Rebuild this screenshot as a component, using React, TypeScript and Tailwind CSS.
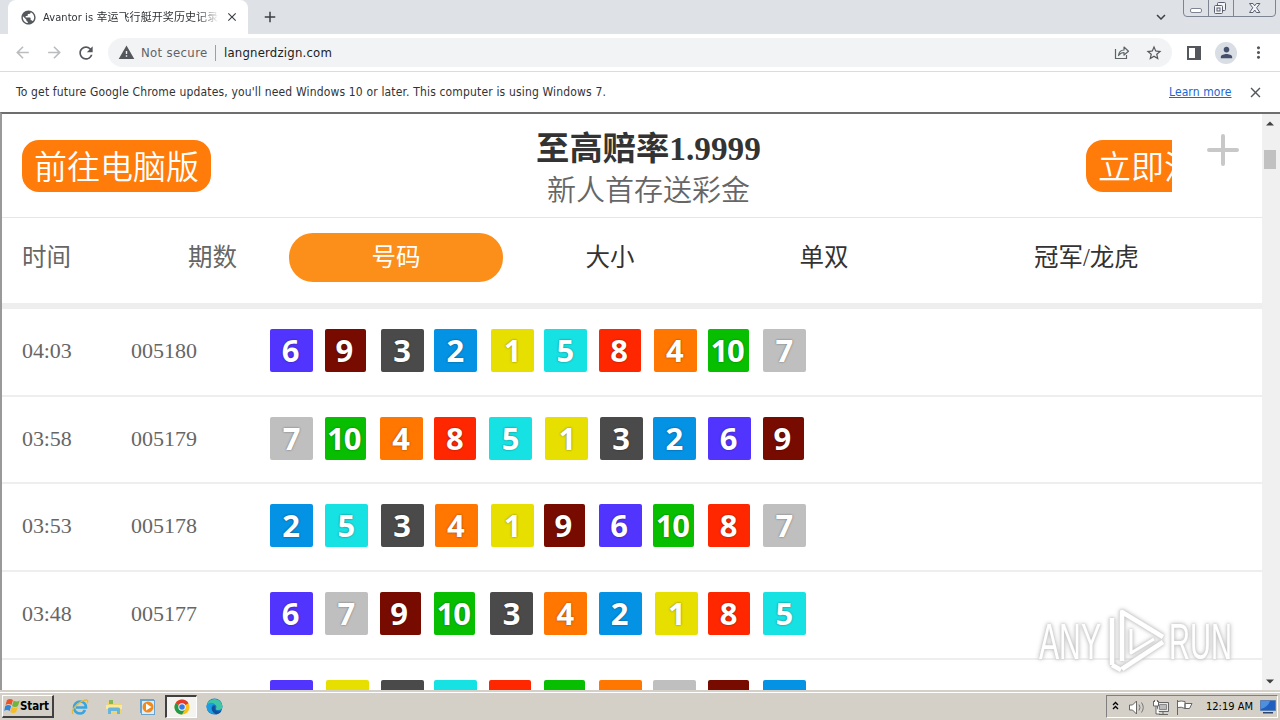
import type { ReactNode } from 'react';
import {
  MdAdd,
  MdArrowBack,
  MdArrowForward,
  MdClose,
  MdKeyboardArrowDown,
  MdMoreVert,
  MdPerson,
  MdPublic,
  MdRefresh,
  MdStarBorder,
  MdWarning
} from 'react-icons/md';

interface Draw {
  time: string;
  issue: string;
  numbers: number[];
}

const draws: Draw[] = [
  { time: '04:03', issue: '005180', numbers: [6, 9, 3, 2, 1, 5, 8, 4, 10, 7] },
  { time: '03:58', issue: '005179', numbers: [7, 10, 4, 8, 5, 1, 3, 2, 6, 9] },
  { time: '03:53', issue: '005178', numbers: [2, 5, 3, 4, 1, 9, 6, 10, 8, 7] },
  { time: '03:48', issue: '005177', numbers: [6, 7, 9, 10, 3, 4, 2, 1, 8, 5] }
];

const lastNumbers = [6, 1, 3, 5, 8, 10, 4, 7, 9, 2];

const tileStyles: Record<number, string> = {
  1: 'bg-[#e6df00] ml-[1.5px] w-[43px] pl-[1px]',
  2: 'bg-[#0492e4] w-[43px] pr-[1px]',
  3: 'bg-[#4a4a4a] ml-[1px] w-[43px]',
  4: 'bg-[#ff7600] ml-[0.5px] w-[43px] pr-[1px]',
  5: 'bg-[#17e2e3] w-[43px]',
  6: 'bg-[#5234ff] w-[43px] pr-[2px]',
  7: 'bg-[#bfbfbf] w-[43px]',
  8: 'bg-[#ff2700] w-[42px] pr-[1px]',
  9: 'bg-[#780b00] w-[41px] pr-[2px]',
  10: 'bg-[#07bf00] w-[41px] tracking-[-1px] pr-[3px]'
};

function NumberTile({ value, cut }: { value: number; cut?: boolean }) {
  return (
    <div className="w-[54.77px] shrink-0">
      <div
        className={`flex items-center justify-center font-['Noto_Sans'] text-[31px] leading-none font-bold text-white [text-shadow:0_0_2px_rgba(0,0,0,0.5)] ${
          cut ? 'h-[12px] rounded-t-[2px]' : 'h-[43px] rounded-[2px]'
        } ${tileStyles[value]}`}
      >
        {!cut && value}
      </div>
    </div>
  );
}

function DrawRow({ draw }: { draw: Draw }) {
  return (
    <div className="flex h-[87.75px] shrink-0 border-b-2 border-[#eee] pt-5 pl-5 text-[22px] text-[#666]">
      <span className="w-[109px] leading-[44.500px] tracking-[-0.1px]">{draw.time}</span>
      <span className="w-[139px] leading-[44.500px]">{draw.issue}</span>
      <div className="flex">
        {draw.numbers.map((n) => (
          <NumberTile key={n} value={n} />
        ))}
      </div>
    </div>
  );
}

function ShareIcon() {
  return (
    <svg className="mt-[-2px]" width="16" height="16" viewBox="0 0 16 16" fill="none" stroke="#5f6368" strokeWidth="1.2">
      <path d="M1.500 5v9.500h11V11" />
      <path d="M4.500 11.500C5 8 7 6 10 6V3l4.500 4.200L10 11V8.500C7.500 8.500 6 9.500 4.500 11.500z" strokeLinejoin="round" />
    </svg>
  );
}

function WindowControls() {
  return (
    <svg className="ml-[16px] shrink-0" width="94" height="18" viewBox="0 0 94 18" fill="none" stroke="#7d8593">
      <path d="M.5 0v13q0 3.500 3.500 3.500h85q3.500 0 3.500-3.500V0M25.500 0v16.500M50.500 0v16.500" />
      <rect x="7.500" y="8.500" width="11" height="4" rx="1.500" fill="#fff" />
      <g stroke="#5a6070" fill="#f4f5f7">
        <rect x="34.500" y="2.500" width="8" height="8" rx="1" />
        <rect x="31.500" y="5.500" width="8" height="8" rx="1" />
        <rect x="34" y="8" width="3" height="3" />
        <path d="M66.500 3.500h3.500l1.700 2.300 1.700-2.300h3.500l-3.300 4.300 3.300 4.700h-3.500l-1.700-2.500-1.700 2.500h-3.500l3.300-4.700z" />
      </g>
    </svg>
  );
}

function TabStrip() {
  return (
    <div className="flex h-[34px] shrink-0 bg-[#dee1e6]">
      <div className="ml-2 flex w-[240px] items-center rounded-t-lg bg-white pl-[12px] text-[#45494d]">
        <MdPublic size={17} color="#54575b" />
        <div className="ml-[6px] h-[17px] w-[176px] overflow-hidden text-[11px] leading-[17px] tracking-[0.08px] whitespace-nowrap text-[#303336] [mask-image:linear-gradient(to_right,#000_155px,transparent_176px)]">
          Avantor is 幸运飞行艇开奖历史记录
        </div>
        <MdClose className="ml-[6px]" size={14} color="#3c4043" />
      </div>
      <div className="flex flex-1 items-center pl-[13px]">
        <MdAdd size={18} color="#3c4043" />
      </div>
      <MdKeyboardArrowDown className="mt-[8px] mr-[-3px] ml-[3px]" size={18} color="#3c4043" />
      <WindowControls />
      <div className="w-[3px]" />
    </div>
  );
}

function Toolbar() {
  return (
    <div className="flex h-[38px] shrink-0 items-center border-b border-[#dadce0] bg-white pl-[13px]">
      <MdArrowBack size={19} color="#babcbe" />
      <MdArrowForward className="ml-[13px]" size={19} color="#babcbe" />
      <MdRefresh className="ml-[12px]" size={20} color="#54575b" />
      <div className="ml-[12px] flex h-[29px] w-[1064px] items-center rounded-full bg-[#f1f3f4] pl-[10px] text-[13px]">
        <MdWarning size={17} color="#54575b" />
        <span className="ml-[6px] w-[68px] tracking-[0.35px] whitespace-nowrap text-[#5f6368]">Not secure</span>
        <span className="ml-[6px] h-[16px] w-px bg-[#9aa0a6]" />
        <span className="ml-[8px] flex-1 tracking-[0.2px] whitespace-nowrap text-[#202124]">langnerdzign.com</span>
        <ShareIcon />
        <MdStarBorder className="mr-[9px] ml-[15px]" size={18} color="#54575b" />
      </div>
      <svg className="ml-[15px]" width="14" height="14" viewBox="0 0 14 14" fill="none" stroke="#54575b" strokeWidth="2">
        <rect x="1" y="1" width="12" height="12" />
        <path d="M8 1h5v12H8z" fill="#54575b" stroke="none" />
      </svg>
      <div className="ml-[14px] flex size-[22px] items-center justify-center rounded-full bg-[#d9dde4]">
        <MdPerson size={17} color="#45506b" />
      </div>
      <MdMoreVert className="ml-[12px]" size={19} color="#54575b" />
    </div>
  );
}

function InfoBar() {
  return (
    <div className="flex h-[40px] shrink-0 items-center bg-white pl-4 text-[12px] text-[#303336]">
      <span className="w-[1153px] tracking-[0.160px] whitespace-nowrap">
        To get future Google Chrome updates, you'll need Windows 10 or later. This computer is using Windows 7.
      </span>
      <a className="w-[63px] tracking-[0.1px] whitespace-nowrap text-[#1967d2] underline">Learn more</a>
      <MdClose className="ml-[15px]" size={17} color="#54575b" />
    </div>
  );
}

function PromoHeader() {
  return (
    <div className="flex h-[103px] shrink-0 items-start border-b border-[#e6e6e6] pl-5">
      <div className="mt-[25px] h-[52px] w-[189px] rounded-[17px] bg-[#ff7b0a] pl-3 text-[33px] leading-[56px] font-[350] whitespace-nowrap text-white">
        前往电脑版
      </div>
      <div className="ml-[325px] w-[225px] text-center whitespace-nowrap">
        <div className="mt-[13px] h-[42px] text-[33.300px] leading-[42px] font-bold text-[#333]">至高赔率1.9999</div>
        <div className="h-[38px] text-[29px] leading-[42px] font-[350] text-[#666]">新人首存送彩金</div>
      </div>
      <div className="mt-[25px] ml-[325px] h-[52px] w-[86px] overflow-hidden rounded-l-[17px] bg-[#ff7b0a] pl-3 text-[33px] leading-[56px] font-[350] whitespace-nowrap text-white">
        立即注册
      </div>
      <svg className="mt-[19px] ml-[35px]" width="32" height="32" viewBox="0 0 32 32" stroke="#c8c8c8" strokeWidth="4" strokeLinecap="round">
        <path d="M2 16h28M16 2v28" />
      </svg>
    </div>
  );
}

function TableHeader() {
  return (
    <div className="flex h-[90.75px] shrink-0 items-start border-b-[6px] border-[#eee] pt-[15px] pl-5 text-[24.500px] leading-[49px] whitespace-nowrap text-[#333]">
      <span className="w-[166px] text-[#666]">时间</span>
      <span className="w-[101px] text-[#666]">期数</span>
      <span className="h-[49px] w-[214px] rounded-3xl bg-[#fc8e1a] text-center text-white">号码</span>
      <span className="w-[214px] text-center">大小</span>
      <span className="w-[214px] text-center">单双</span>
      <span className="ml-[103px]">冠军/龙虎</span>
    </div>
  );
}

function Scrollbar() {
  return (
    <div className="flex w-[18px] shrink-0 flex-col items-center bg-[#f0f0f0] pr-[2px]">
      <svg className="mt-[7px]" width="8" height="5" viewBox="0 0 8 5">
        <path d="M0 4.500 4 .5l4 4z" fill="#404040" />
      </svg>
      <div className="mt-[24px] h-[19px] w-[12px] bg-[#c1c1c1]" />
      <div className="flex-1" />
      <svg className="mb-[6px]" width="8" height="5" viewBox="0 0 8 5">
        <path d="M0 .5 4 4.500l4-4z" fill="#404040" />
      </svg>
    </div>
  );
}

function Watermark() {
  return (
    <svg
      className="absolute top-[604px] left-[1032px] [filter:drop-shadow(0_0_1px_#ccc)_drop-shadow(0_0_2px_#bbb)]"
      width="212"
      height="74"
      viewBox="0 0 212 74"
      fontFamily="Liberation Sans"
      fontSize="50"
      fill="#fff"
    >
      <text x="7" y="55" textLength="62" lengthAdjust="spacingAndGlyphs">ANY</text>
      <text x="137" y="55" textLength="63" lengthAdjust="spacingAndGlyphs">RUN</text>
      <g fill="none" stroke="#fff" strokeWidth="4.500" strokeLinejoin="round">
        <path d="M90 57V8l41 25" />
        <path d="M99 25v24l23-14" strokeWidth="3" />
        <path d="M80 14v47" />
        <path d="M131 38 90 65M80 61l9 5" />
      </g>
    </svg>
  );
}

function WindowsFlag() {
  return (
    <svg width="16" height="16" viewBox="0 0 16 16">
      <path d="M3 2q3-2 6 0L7.500 7q-3-2-6 0z" fill="#e8532a" />
      <path d="M9.700 2.500q3 2 6 0L14 8q-3 2-6 0z" fill="#72b33d" />
      <path d="M1.200 8q3-2 6 0l-1.500 5q-3-2-5.500 0z" fill="#3184d6" />
      <path d="M7.800 8.700q3 2 6 0l-1.600 5.200q-3 2-6 0z" fill="#f6bc27" />
    </svg>
  );
}

function IeIcon() {
  return (
    <svg width="18" height="18" viewBox="0 0 18 18" fill="none">
      <path d="M14 12q-1.500 3.500-5 3.500c-4 0-6-3-6-6s2.500-6 6-6 6 2.500 6 6H5" stroke="#36a5e0" strokeWidth="2.600" />
      <path d="M2 16C-1 12 9 2 16 2q1.500 1 0 3.500" stroke="#e8b93d" strokeWidth="1.300" />
    </svg>
  );
}

function ExplorerIcon() {
  return (
    <svg width="18" height="18" viewBox="0 0 18 18">
      <path d="M2 3h5l1 2h8v10H2z" fill="#efd56d" />
      <path d="M4 2h4v4H4z" fill="#82b95b" />
      <path d="M1 7h16v4H1z" fill="#f8e8a0" />
      <path d="M3 16v-5q0-1.500 1.500-1.500h9q1.500 0 1.500 1.500v5h-3v-3H6v3z" fill="#67b5dc" />
    </svg>
  );
}

function PlayerIcon() {
  return (
    <svg width="18" height="18" viewBox="0 0 18 18">
      <rect x="1.500" y="1.500" width="13" height="13" fill="#cfe5f6" stroke="#6ba3cf" />
      <rect x="2.500" y="2.500" width="13" height="14" fill="#dcecf8" stroke="#6ba3cf" />
      <circle cx="9" cy="9" r="5.500" fill="#f28a1b" />
      <path d="M7 5.500v7l5.500-3.500z" fill="#fff" />
    </svg>
  );
}

function ChromeIcon() {
  return (
    <svg width="16" height="16" viewBox="0 0 16 16">
      <circle cx="8" cy="8" r="7.500" fill="#fbc116" />
      <path d="M8 8 1.500 4.250A7.500 7.500 0 0 1 14.500 4.250z" fill="#e33b2e" />
      <path d="M1.500 4.250A7.500 7.500 0 0 0 8 15.500l3.200-5.600L8 8z" fill="#229a48" />
      <circle cx="8" cy="8" r="3.700" fill="#fff" />
      <circle cx="8" cy="8" r="2.800" fill="#3b78e7" />
    </svg>
  );
}

function EdgeIcon() {
  return (
    <svg width="17" height="17" viewBox="0 0 17 17">
      <circle cx="8.500" cy="8.500" r="8" fill="#1273c4" />
      <path d="M.8 7A8 8 0 0 1 16.500 8q0 4-4 4-3 0-2.500-1.500 1-1.500 0-3Q6 3.500.8 7z" fill="#3fc6a5" />
      <path d="M.8 7Q5 3 9 6.500 5.500 6.500 5.500 10q0 3.500 4 6Q1 16.500.5 8.500z" fill="#1b9de2" />
      <path d="M9 8q-1.500 5 4 5.500l2.500-.8Q14 16 10 16.400 5 13 6 9.500q1-2 3-1.500z" fill="#124f9c" />
    </svg>
  );
}

function TaskbarItem({ children }: { children: ReactNode }) {
  return <div className="flex h-[23px] w-[34px] items-center justify-center">{children}</div>;
}

function TrayIcons() {
  return (
    <svg width="84" height="20" viewBox="0 0 84 20" fill="none" stroke="#666">
      <path d="m2 8 2.500-2.500L7 8M2 12l2.500-2.500L7 12" stroke="#000" strokeWidth="1.300" />
      <path d="M18.500 8v5h3l4 4V4l-4 4z" fill="#fff" />
      <path d="M28 7.500q2 3 0 6M30.500 5.500q3.500 5 0 10" stroke="#777" />
      <path d="M46.500 5.500h11v9h-11zM48 17.500h9M52 15v2" fill="#e9e9e9" />
      <path d="M48.500 7.500h7v5h-7z" fill="#bbb" stroke="#888" />
      <path d="M42.500 4v5h5V4M43.500 3v2M46.500 3v2M45 9v8h4" fill="#fff" />
      <path d="M66.500 3v15M67 4.500q3-1 7 0v7q-4-2-7-1M74 6.500h7l-2.500 5H74z" fill="#fff" />
    </svg>
  );
}

function Taskbar() {
  return (
    <div className="flex h-[28px] shrink-0 items-start border-t border-[#fff] bg-[#d4d0c8] pt-[2px] font-['DejaVu_Sans_Condensed','DejaVu_Sans',sans-serif]">
      <div className="ml-[2px] flex h-[23px] w-[52px] items-center border-t border-r-2 border-b-2 border-l border-t-white border-r-[#404040] border-b-[#404040] border-l-white pl-px text-[11.500px] font-bold whitespace-nowrap text-black">
        <WindowsFlag />
        <span className="mt-[2px] tracking-[-0.1px]">Start</span>
      </div>
      <div className="w-[9px]" />
      <TaskbarItem><IeIcon /></TaskbarItem>
      <TaskbarItem><ExplorerIcon /></TaskbarItem>
      <TaskbarItem><PlayerIcon /></TaskbarItem>
      <div className="flex h-[23px] w-[32px] items-center justify-center border-t-2 border-r border-b border-l-2 border-t-[#404040] border-r-white border-b-white border-l-[#404040] bg-[#f5f3f0]">
        <ChromeIcon />
      </div>
      <TaskbarItem><EdgeIcon /></TaskbarItem>
      <div className="flex-1" />
      <div className="mr-[2px] flex h-[23px] w-[172px] items-center border border-t-[#808080] border-r-white border-b-white border-l-[#808080] pl-[4px] text-[11px] text-black">
        <TrayIcons />
        <span className="mt-[2px] ml-[11px] w-[49px] whitespace-nowrap">12:19 AM</span>
        <svg className="ml-[5px]" width="16" height="14" viewBox="0 0 16 14">
          <path d="M.5.5h15v10H.5z" fill="#1f5fc0" stroke="#5a7fb0" />
          <path d="M1 1h9q-2 6-9 8z" fill="#4d90e0" />
          <path d="M3 12h10v1.500H3z" fill="#2a4770" />
        </svg>
      </div>
    </div>
  );
}

export default function App() {
  return (
    <div className="relative flex h-[720px] w-[1280px] flex-col overflow-hidden bg-white font-['DejaVu_Sans_Condensed','Noto_Sans_CJK_SC',sans-serif]">
      <TabStrip />
      <Toolbar />
      <InfoBar />
      <div className="flex h-[578px] shrink-0 border-t-2 border-l-2 border-t-[#6e6e6e] border-l-[#999]">
        <div className="flex flex-1 flex-col overflow-hidden bg-white pt-px font-['Liberation_Serif','Noto_Sans_CJK_SC',serif]">
          <PromoHeader />
          <TableHeader />
          {draws.map((draw) => (
            <DrawRow key={draw.issue} draw={draw} />
          ))}
          <div className="flex pt-5 pl-[268px]">
            {lastNumbers.map((n) => (
              <NumberTile key={n} value={n} cut />
            ))}
          </div>
        </div>
        <Scrollbar />
      </div>
      <div className="h-[2px] shrink-0 bg-[#d4d0c8]" />
      <Taskbar />
      <Watermark />
    </div>
  );
}
